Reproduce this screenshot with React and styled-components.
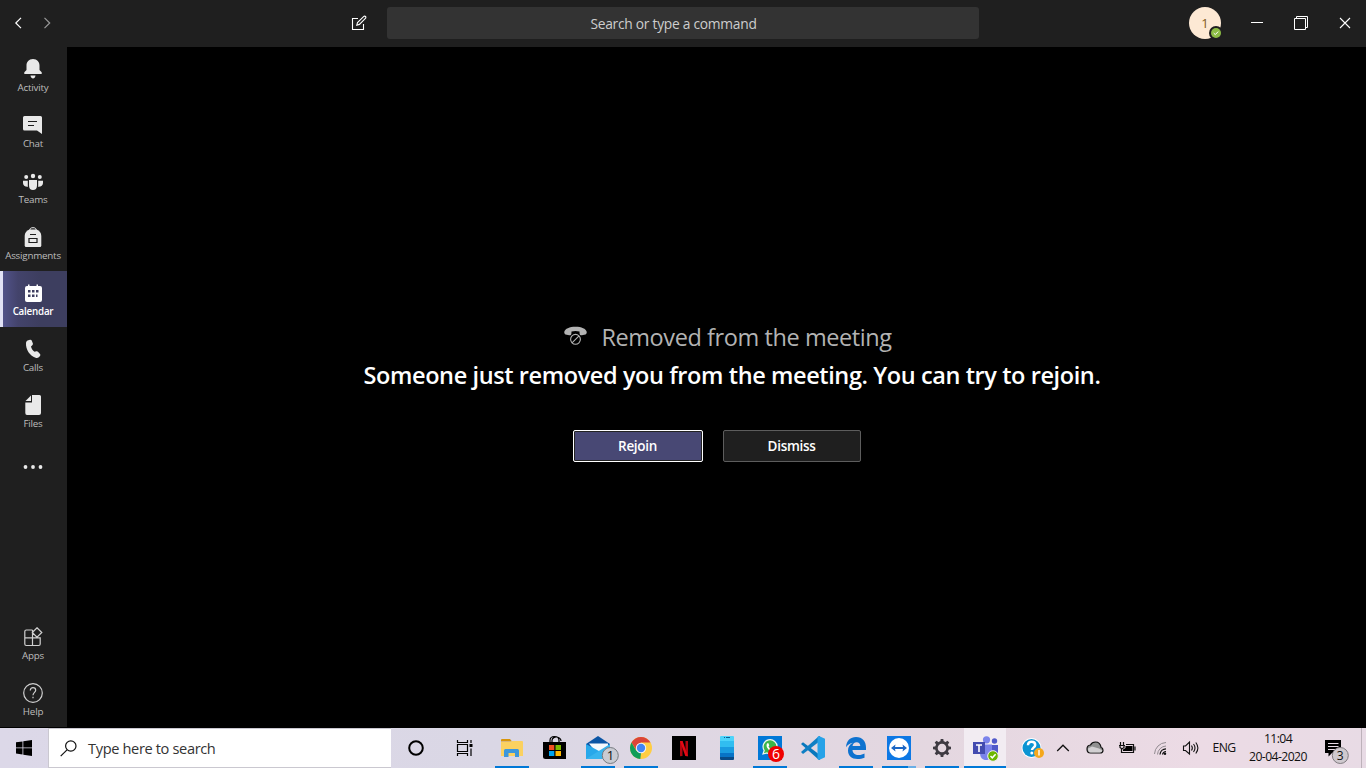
import React from "react";
import styled, { createGlobalStyle, css } from "styled-components";

const GlobalStyle = createGlobalStyle`
  * { box-sizing: border-box; }
  html, body, #root { height: 100%; }
  body {
    margin: 0;
    background: #000;
    overflow: hidden;
    font-family: "Open Sans", "Noto Sans", sans-serif;
  }
  svg { display: block; flex: none; }
`;

const Screen = styled.div`
  display: flex;
  flex-direction: column;
  width: 1366px;
  height: 768px;
  background: #000;
`;

const TitleBar = styled.header`
  display: flex;
  align-items: center;
  height: 47px;
  background: #1f1f1f;
  color: #fff;
`;

const HistoryNav = styled.nav`
  display: flex;
  width: 350px;
  padding-left: 14px;
  padding-bottom: 1px;
  gap: 20px;
`;

const ComposeButton = styled.div`
  width: 37px;
  margin-top: -1px;
`;

const CommandBox = styled.div`
  display: flex;
  align-items: center;
  justify-content: center;
  width: 592px;
  height: 32px;
  margin-top: -1px;
  padding-right: 19px;
  background: #333;
  border-radius: 3px;
  color: #cdcdcd;
  font-size: 13.8px;
  letter-spacing: -0.27px;
`;

const WindowControls = styled.div`
  display: flex;
  align-items: center;
  margin-left: 30px;
  padding-bottom: 1px;
  gap: 31px;
`;

const Avatar = styled.div`
  position: relative;
  display: grid;
  place-items: center;
  width: 32px;
  height: 32px;
  margin: -1px 0 0 210px;
  border-radius: 50%;
  background: #fde9d4;
  color: #835c22;
  font-size: 13px;
  font-weight: 500;
`;

const Presence = styled.div`
  position: absolute;
  right: -2px;
  bottom: -1px;
`;

const Body = styled.div`
  display: flex;
  height: 680px;
`;

const Sidebar = styled.aside`
  display: flex;
  flex-direction: column;
  width: 67px;
  background: #1f1f1f;
`;

const Spacer = styled.div`
  flex: 1;
`;

const SideItem = styled.div`
  display: flex;
  flex-direction: column;
  align-items: center;
  height: 56px;
  padding: 12px 1px 0 0;
  color: ${(p) => (p.$active ? "#fff" : "#e9e9e9")};
  ${(p) =>
    p.$active &&
    css`
      background: linear-gradient(90deg, #54558f 0, #43436b 18px, #3d3e5f 40px);
      box-shadow: inset 3px 0 0 #e2e2f6;
    `}
`;

const SideLabel = styled.span`
  margin-top: 2px;
  line-height: 13px;
  font-size: 9.8px;
  white-space: nowrap;
  letter-spacing: -0.22px;
  font-weight: ${(p) => (p.$active ? 600 : 500)};
  color: ${(p) => (p.$active ? "#fff" : "#bdbdbd")};
`;

const Main = styled.main`
  display: flex;
  flex: 1;
  flex-direction: column;
  align-items: center;
  padding-top: 272px;
`;

const Notice = styled.div`
  display: flex;
  align-items: center;
  height: 36px;
  gap: 14px;
  padding-left: 23px;
  color: #b3b3b3;
`;

const NoticeIcon = styled.div`
  margin-top: -2px;
`;

const NoticeTitle = styled.h1`
  margin: 0;
  font-size: 23.5px;
  font-weight: 400;
  line-height: 36px;
  white-space: nowrap;
  letter-spacing: -0.42px;
`;

const NoticeText = styled.p`
  margin: 2px 0 0;
  padding-left: 31px;
  font-size: 23.5px;
  font-weight: 600;
  line-height: 36px;
  color: #fff;
  white-space: nowrap;
  letter-spacing: -0.4px;
`;

const Actions = styled.div`
  display: flex;
  gap: 20px;
  margin-top: 37px;
`;

const Button = styled.button`
  width: ${(p) => p.$width}px;
  height: 32px;
  padding: 0;
  border-radius: 2px;
  font: 650 13.5px/18px "Open Sans", sans-serif;
  letter-spacing: -0.32px;
  color: #fff;
  border: 1px solid ${(p) => (p.$primary ? "#fff" : "#5d5d5d")};
  background: ${(p) => (p.$primary ? "#484874" : "#1f1f1f")};
  box-shadow: ${(p) => (p.$primary ? "inset 0 0 0 1px #232323" : "none")};
`;

const Taskbar = styled.footer`
  display: flex;
  height: 40px;
  margin-top: 1px;
  color: #111;
  background: linear-gradient(90deg, #dcd8e8 0, #dad7e5 500px, #dfd7e3 700px, #e4d7e0 930px, #ecdbe5 1200px, #e8dbe5 1366px);
`;

const StartButton = styled.div`
  display: grid;
  place-items: center;
  width: 48px;
`;

const SearchBox = styled.div`
  display: flex;
  align-items: center;
  width: 343px;
  padding-left: 11px;
  gap: 11px;
  background: #fff;
  border: 1px solid #cac8d0;
  border-right: 0;
  color: #333;
  font-size: 14.6px;
  letter-spacing: -0.36px;
`;

const SystemButton = styled.div`
  display: grid;
  place-items: center;
  width: ${(p) => p.$width}px;
`;

const TaskList = styled.div`
  display: flex;
  margin-left: 3px;
`;

const Task = styled.div`
  width: ${(p) => (p.$active ? 42 : 43)}px;
  height: 40px;
  background: ${(p) =>
    p.$active
      ? "linear-gradient(#0078d7,#0078d7) 0 38px / 42px 2px no-repeat, #f2ecf2"
      : p.$stacked
        ? "linear-gradient(90deg,#0078d7 26px,#6aaee6 26px) 4px 38px / 34px 2px no-repeat"
        : p.$running
          ? "linear-gradient(#0078d7,#0078d7) 4px 38px / 34px 2px no-repeat"
          : "none"};
`;

const Tray = styled.div`
  display: flex;
  margin-left: 10px;
`;

const Language = styled.div`
  display: grid;
  place-items: center;
  width: 36px;
  padding-bottom: 1px;
  font-size: 12.2px;
  letter-spacing: -0.6px;
`;

const Clock = styled.div`
  width: 72px;
  padding-top: 2px;
  text-align: center;
  font-size: 12.2px;
  line-height: 18px;
  letter-spacing: -0.58px;
  white-space: nowrap;
`;

const ShowDesktop = styled.div`
  flex: 1;
  border-left: 1px solid #bdb2ba;
`;

const BadgeNumber = styled.text`
  font-family: "Open Sans", sans-serif;
  text-anchor: middle;
`;

const SideIcon = ({ children }) => (
  <svg width="20" height="20" viewBox="0 0 20 20" fill="currentColor">{children}</svg>
);

const outline = { fill: "none", stroke: "#d0d0d0", strokeWidth: 1.2 };

const icons = {
  bell: (
    <SideIcon>
      <path d="M10 0C5.8 0 3.5 3 3.5 6.5V11L1.3 13.2V15H18.700V13.200L16.500 11V6.500C16.500 3 14.200 0 10 0Z" />
      <path d="M7.500 16.500H12.500C12 18.700 11.300 19.500 10 19.500S8 18.700 7.500 16.500Z" />
    </SideIcon>
  ),
  chat: (
    <SideIcon>
      <path d="M1.500 1H17.500Q19 1 19 2.500V19L14 15.500H1.500Q0 15.500 0 14V2.500Q0 1 1.500 1Z" />
      <path d="M5 6.500H14M5 10.500H11" stroke="#1f1f1f" strokeWidth="1.200" />
    </SideIcon>
  ),
  teams: (
    <SideIcon>
      <circle cx="10" cy="5" r="2.200" />
      <circle cx="3.200" cy="6" r="2" />
      <circle cx="16.800" cy="6" r="2" />
      <path d="M6 9H14V14.500C14 17.500 12.500 19 10 19S6 17.500 6 14.500ZM0 9.800H4.800V14.800L5 15.700C2 15.900 0 14.500 0 12ZM20 9.800H15.200V14.800L15 15.700C18 15.900 20 14.500 20 12Z" />
    </SideIcon>
  ),
  bag: (
    <SideIcon>
      <path d="M6.800 3C7 1.200 8 .7 10 .7S13 1.200 13.200 3" fill="none" stroke="currentColor" />
      <path d="M6.500 2.500H13.500C16.500 3.500 18.300 6 18.300 9V18.500Q18.300 20 16.800 20H3.200Q1.700 20 1.700 18.500V9C1.700 6 3.500 3.500 6.500 2.500Z" />
      <path d="M7 7.500H13M6 11.500H14V15.500H6Z" fill="none" stroke="#1f1f1f" strokeWidth="1.200" />
    </SideIcon>
  ),
  calendar: (
    <SideIcon>
      <path d="M4 3H5V1.500H6.500V3H13.500V1.500H15V3H17Q19 3 19 5V17Q19 19 17 19H4Q2 19 2 17V5Q2 3 4 3Z" />
      <path d="M9 7H11.500V9.500H9ZM13 7H15.500V9.500H13ZM5 11.500H7.500V14H5ZM5 7H7.500V9.500H5ZM9 11.500H11.500V14H9ZM13 11.500H14.500V14H13Z" fill="#3e3e60" />
    </SideIcon>
  ),
  phone: (
    <SideIcon>
      <path d="M4.500 1.500L7 .7C7.800.5 8.400.9 8.700 1.600L9.800 4.300C10.100 5 9.900 5.700 9.300 6.200L8 7.500C8.400 9.800 9.700 11.500 11.600 12.800L13.300 12.300C14 12.100 14.700 12.300 15.200 12.900L17 15.100C17.500 15.700 17.400 16.400 17 17L15.800 18.300C15.100 19 14.200 19.200 13.200 19C6.700 17.200 2.600 10.500 3 4.100C3.100 2.700 3.700 1.900 4.500 1.500Z" />
    </SideIcon>
  ),
  file: (
    <SideIcon>
      <path d="M9 0H16.500Q18 0 18 1.500V18Q18 20 16 20H4Q2.300 20 2.300 18V7.500H9Z" />
      <path d="M2.500 6L8 .5V6Z" />
    </SideIcon>
  ),
  dots: (
    <SideIcon>
      <circle cx="2.500" cy="16" r="1.900" />
      <circle cx="10" cy="16" r="1.900" />
      <circle cx="17.500" cy="16" r="1.900" />
    </SideIcon>
  ),
  apps: (
    <SideIcon>
      <path {...outline} d="M9.500 3H3.300Q1.800 3 1.800 4.500V17Q1.800 18.500 3.300 18.500H15.700Q17.200 18.500 17.200 17V10.800H1.800M9.500 18.500V3M14 .8L18.800 5.500L14 10.200L9.300 5.500Z" />
    </SideIcon>
  ),
  help: (
    <SideIcon>
      <circle cx="10" cy="10" r="9.300" {...outline} />
      <path {...outline} d="M7.300 7.500C7.300 5.600 8.400 4.700 10 4.700C11.700 4.700 12.700 5.700 12.700 7.200C12.700 9.300 10 9.500 10 12.300M10 13.700V15.200" />
    </SideIcon>
  ),
};

const primaryNav = [
  ["Activity", "bell"],
  ["Chat", "chat"],
  ["Teams", "teams"],
  ["Assignments", "bag"],
  ["Calendar", "calendar"],
  ["Calls", "phone"],
  ["Files", "file"],
  ["", "dots"],
];
const secondaryNav = [
  ["Apps", "apps"],
  ["Help", "help"],
];

const NavItem = ({ item: [label, icon] }) => {
  const active = label === "Calendar";
  return (
    <SideItem $active={active}>
      {icons[icon]}
      <SideLabel $active={active}>{label}</SideLabel>
    </SideItem>
  );
};

const TaskIcon = ({ children }) => (
  <svg width="43" height="40" viewBox="0 0 43 40" fill="none">{children}</svg>
);

const TrayIcon = ({ width = 32, children }) => (
  <svg width={width} height="40" viewBox={`0 0 ${width} 40`} fill="none" stroke="#111">{children}</svg>
);

const gearTeeth = [0, 45, 90, 135, 180, 225, 270, 315];

const tasks = [
  {
    name: "explorer",
    running: true,
    art: (
      <>
        <path d="M10 12Q10 11 11 11H19L21 13.500H10Z" fill="#d8950a" />
        <path d="M10 14H20L21 13H31Q32 13 32 14V28H10Z" fill="#fbd160" />
        <path d="M13 29V22.500Q13 21 14.500 21H26.500Q28 21 28 22.500V29H24V25H17.500V29Z" fill="#3d97dc" />
      </>
    ),
  },
  {
    name: "store",
    art: (
      <>
        <path d="M16 15V12.500C16 9.500 18 8.500 20.500 8.500S25 9.500 25 12.500V15M18 15V12.500C18 10 21 8.500 23 9S27 11 27 13" stroke="#000" strokeWidth="1.200" />
        <path d="M9 14H32V31H11.500Q9 31 9 28.500Z" fill="#000" />
        <path d="M15 17H20.300V22H15Z" fill="#f25022" />
        <path d="M21.500 17H27V22H21.500Z" fill="#7fba00" />
        <path d="M15 23H20.300V28H15Z" fill="#00a4ef" />
        <path d="M21.500 23H27V28H21.500Z" fill="#ffb900" />
      </>
    ),
  },
  {
    name: "mail",
    running: true,
    art: (
      <>
        <path d="M9 16L21 8L33 16V20H9Z" fill="#0b55a5" />
        <path d="M12 15.500H31V18L19.500 25Z" fill="#f5f9fd" />
        <path d="M9 16L33 29V31H9Z" fill="#28a8ea" />
        <path d="M33 16V31H9Z" fill="#38b4ee" />
        <circle cx="33.300" cy="27.500" r="8" fill="#c9cbd2" stroke="#777b80" />
        <BadgeNumber x="33.500" y="32" fontSize="13" fill="#111">1</BadgeNumber>
      </>
    ),
  },
  {
    name: "chrome",
    running: true,
    art: (
      <>
        <circle cx="21" cy="20" r="11" fill="#ffcd42" />
        <path d="M11.500 14.500A11 11 0 0 1 30.500 14.500H21L16.500 22.500Z" fill="#db4437" />
        <path d="M11.500 14.500L16.300 22.700L21 25L20.300 31A11 11 0 0 1 11.500 14.500Z" fill="#0f9d58" />
        <circle cx="21" cy="20" r="5.200" fill="#f4f4f4" />
        <circle cx="21" cy="20" r="4.200" fill="#4285f4" />
      </>
    ),
  },
  {
    name: "netflix",
    art: (
      <>
        <path d="M9 8H33V32H9Z" fill="#000" />
        <path d="M17 13H19.500V28L17 28.300ZM22.500 13H25V28.300L22.500 28Z" fill="#b1060f" />
        <path d="M17 13H19.600L25 28.300L22.300 28Z" fill="#e50914" />
      </>
    ),
  },
  {
    name: "phone",
    art: (
      <>
        <path d="M15 8H27Q28 8 28 9V14H14V9Q14 8 15 8Z" fill="#4dd3fa" />
        <path d="M14 13H28V19H14Z" fill="#31bdf0" />
        <path d="M14 19H28V25H14Z" fill="#1a9be0" />
        <path d="M14 25H28V29H14Z" fill="#0873c6" />
        <path d="M14 29H28V31Q28 32 27 32H15Q14 32 14 31Z" fill="#094a87" />
        <path d="M18 9.500H19M20 9.500H24" stroke="#0b5f93" />
      </>
    ),
  },
  {
    name: "whatsapp",
    running: true,
    art: (
      <>
        <path d="M9 8H33V32H9Z" fill="#0078d7" />
        <path d="M14 26L15.200 22.500A7 7 0 1 1 18 25Z" fill="#3cb54a" stroke="#eef7ee" strokeWidth="1.200" />
        <path d="M18 15.500L19.200 15L20.300 17.200L19.500 18.300C20 19.700 21 20.700 22.300 21.200L23.500 20.300L25.300 21.500C25 23.200 23 23.700 21 22.600C18.500 21 16.700 18 18 15.500Z" fill="#fff" />
        <circle cx="27" cy="26" r="8" fill="#f00000" />
        <BadgeNumber x="27" y="31" fontSize="14" fill="#fff">6</BadgeNumber>
      </>
    ),
  },
  {
    name: "vscode",
    art: (
      <>
        <path d="M9 16L11 14.200L28 27V32L26.500 31.500Z" fill="#0878bd" />
        <path d="M9 24L11 26L28 13V8L26.500 8.500Z" fill="#0f7fc4" />
        <path d="M27 8L33 10.800V29.200L27 32L25.500 31V9Z" fill="#27a2e8" />
      </>
    ),
  },
  {
    name: "edge",
    running: true,
    art: (
      <path d="M11 19.200C11.500 12.500 15.500 9 21 9C27.500 9 31 13.500 31 19.500V22H17.500C17.800 25.500 20 27 23.500 27C26 27 28 26.400 29.500 25.500V29.700C27.500 30.600 25 31 22.500 31C16.700 31 13 27.800 13 22.500C13 19 14.800 16.200 18 14.700C15 15 12.700 16.600 11 19.200ZM17.500 18H25.300C25.300 15.500 23.800 14.200 21.700 14.200C19.300 14.200 17.900 15.800 17.500 18Z" fill="#0e72cf" />
    ),
  },
  {
    name: "teamviewer",
    stacked: true,
    art: (
      <>
        <path d="M9 8H33V32H9Z" fill="#0d78e4" />
        <circle cx="21" cy="20" r="10" fill="#fff" />
        <path d="M13 20L17.500 16.500L17 19H25L24.500 16.500L29 20L24.500 23.500L25 21H17L17.500 23.500Z" fill="#1b66c4" />
      </>
    ),
  },
  {
    name: "settings",
    running: true,
    art: (
      <>
        <circle cx="21" cy="20" r="5.600" stroke="#3f3b42" strokeWidth="2.600" />
        {gearTeeth.map((angle) => (
          <path key={angle} d="M19.200 14L19.700 11H22.300L22.800 14Z" fill="#3f3b42" transform={`rotate(${angle} 21 20)`} />
        ))}
      </>
    ),
  },
  {
    name: "teams",
    active: true,
    art: (
      <>
        <circle cx="30.500" cy="13" r="2.700" fill="#5059c9" />
        <path d="M26 17H34V24C34 27 32 28.500 29 28.500H26Z" fill="#5059c9" />
        <circle cx="22.500" cy="11.800" r="3.600" fill="#7b83eb" />
        <path d="M16 16.500H28V25C28 29.500 25.500 32 22 32S16 29.500 16 25Z" fill="#7b83eb" />
        <path d="M9 14H21V26H9Z" fill="#434baf" />
        <path d="M12 17H18M15 17V24" stroke="#fff" strokeWidth="1.600" />
        <circle cx="29" cy="28" r="5.300" fill="#6bb700" stroke="#f2ecf2" />
        <path d="M26.500 28L28.300 29.800L31.600 26.300" stroke="#fff" strokeWidth="1.500" />
      </>
    ),
  },
];

export default function App() {
  return (
    <>
      <GlobalStyle />
      <Screen>
        <TitleBar>
          <HistoryNav>
            <svg width="9" height="12" viewBox="0 0 9 12" fill="none" stroke="#fff" strokeWidth="1.200"><path d="M7 .8L1.800 6L7 11.200" /></svg>
            <svg width="9" height="12" viewBox="0 0 9 12" fill="none" stroke="#999" strokeWidth="1.200"><path d="M1.500 .8L6.700 6L1.500 11.200" /></svg>
          </HistoryNav>
          <ComposeButton>
            <svg width="17" height="16" viewBox="0 0 17 16" fill="none" stroke="#fff" strokeWidth="1.100">
              <path d="M8 3.500H2.500V14.500H13.500V9" />
              <path d="M6.800 10.200L7.500 7.500L13.600 1.600C14.200 1 15 1 15.500 1.500S16 2.800 15.400 3.400L9.400 9.400Z" />
            </svg>
          </ComposeButton>
          <CommandBox>Search or type a command</CommandBox>
          <Avatar>
            1
            <Presence>
              <svg width="14" height="14" viewBox="0 0 14 14" fill="none">
                <circle cx="7" cy="7" r="7" fill="#1f1f1f" />
                <circle cx="7" cy="7" r="5" fill="#8cbd45" />
                <path d="M4.700 7.100L6.300 8.600L9.200 5.600" stroke="#fff" />
              </svg>
            </Presence>
          </Avatar>
          <WindowControls>
            <svg width="12" height="14" viewBox="0 0 12 14" stroke="#fff"><path d="M0 6.500H12" /></svg>
            <svg width="14" height="14" viewBox="0 0 14 14" fill="none" stroke="#fff"><path d="M.5 2.500H11.500V13.500H.5ZM2.500 2.500V.5H13.500V11.500H11.500" /></svg>
            <svg width="12" height="12" viewBox="0 0 12 12" stroke="#fff" strokeWidth="1.100"><path d="M1 1L11 11M11 1L1 11" /></svg>
          </WindowControls>
        </TitleBar>

        <Body>
          <Sidebar>
            {primaryNav.map((item) => <NavItem key={item[1]} item={item} />)}
            <Spacer />
            {secondaryNav.map((item) => <NavItem key={item[1]} item={item} />)}
          </Sidebar>
          <Main>
            <Notice>
              <NoticeIcon>
                <svg width="23" height="20" viewBox="0 0 23 20" fill="none">
                  <path d="M.3 5.800C1 2.800 5.500.8 11.500.8S22 2.800 22.700 5.800C22.900 7 22.500 8 21.500 8.500L17.800 9.300C16.500 9.500 15.700 8.900 15.600 7.700L15.500 5.600C13 4.900 10 4.900 7.500 5.600L7.400 7.700C7.300 8.900 6.500 9.500 5.200 9.300L1.500 8.500C.5 8 .1 7 .3 5.800Z" fill="#b3b3b3" />
                  <circle cx="11.500" cy="13.300" r="6.200" fill="#000" />
                  <circle cx="11.500" cy="13.300" r="4.900" stroke="#b3b3b3" strokeWidth="1.100" />
                  <path d="M8 16.800L15 9.800" stroke="#b3b3b3" strokeWidth="1.100" />
                </svg>
              </NoticeIcon>
              <NoticeTitle>Removed from the meeting</NoticeTitle>
            </Notice>
            <NoticeText>Someone just removed you from the meeting. You can try to rejoin.</NoticeText>
            <Actions>
              <Button $primary $width={130}>Rejoin</Button>
              <Button $width={138}>Dismiss</Button>
            </Actions>
          </Main>
        </Body>

        <Taskbar>
          <StartButton>
            <svg width="16" height="16" viewBox="0 0 16 16" fill="#000">
              <path d="M0 2.300L6.500 1.400V7.500H0ZM7.300 1.300L16 0V7.500H7.300ZM0 8.300H6.500V14.500L0 13.600ZM7.300 8.300H16V16L7.300 14.700Z" />
            </svg>
          </StartButton>
          <SearchBox>
            <svg width="17" height="17" viewBox="0 0 17 17" fill="none" stroke="#111" strokeWidth="1.200">
              <circle cx="10.800" cy="6" r="5.200" />
              <path d="M7 9.800L.7 16.200" />
            </svg>
            Type here to search
          </SearchBox>
          <SystemButton $width={50}>
            <svg width="16" height="16" viewBox="0 0 16 16" fill="none" stroke="#000" strokeWidth="2"><circle cx="8" cy="8" r="6.800" /></svg>
          </SystemButton>
          <SystemButton $width={47}>
            <svg width="17" height="16" viewBox="0 0 17 16" fill="none" stroke="#000" strokeWidth="1.200">
              <path d="M1.500 4.500H11.500V11.500H1.500ZM1.500 0V2.500H11.500V0M1.500 16V13.500H11.500V16M15 0V3M15 8.500V16" />
              <path d="M13.500 4H16.500V7H13.500Z" fill="#000" stroke="none" />
            </svg>
          </SystemButton>
          <TaskList>
            {tasks.map((t) => (
              <Task key={t.name} $running={t.running} $stacked={t.stacked} $active={t.active}>
                <TaskIcon>{t.art}</TaskIcon>
              </Task>
            ))}
          </TaskList>
          <Tray>
            <TrayIcon>
              <g stroke="none">
                <circle cx="15.500" cy="20" r="10" fill="#fff" />
                <circle cx="15.500" cy="20" r="9" fill="#0b94d3" />
                <path d="M12 17.300C12 14.700 13.500 13.700 15.600 13.700S19.200 14.900 19.200 16.900C19.200 19.500 16 19.700 16 22" stroke="#fff" strokeWidth="2.500" />
                <circle cx="15.800" cy="25" r="1.500" fill="#fff" />
                <circle cx="23" cy="25" r="5" fill="#f5a81c" />
                <path d="M23 22V27.500" stroke="#fff" strokeWidth="1.400" />
              </g>
            </TrayIcon>
            <TrayIcon width={30}><path d="M9.200 23L15 17.200L20.800 23" strokeWidth="1.300" /></TrayIcon>
            <TrayIcon>
              <path d="M12.500 25H22Q25 25 25 22.200Q25 20 23 19.200C22.500 16 20.500 14 17.500 14C15 14 13.400 15.200 12.500 17C10.500 17.200 9 18.700 9 21Q9 25 12.500 25Z" fill="#909090" strokeWidth="1.200" />
              <path d="M10 20.500L14 18.500L21 20.500L24.300 22.500Q24 24.500 22 24.500H12.500Q10 24.300 10 20.500Z" fill="#d2d0d2" stroke="none" />
            </TrayIcon>
            <TrayIcon>
              <path d="M16 16.500H23.500V24.500H11.500V21M10.500 14V17M13.500 14V17M9 17.500H15M10 17.500V19.500L12 21L14 19.500V17.500M25 18.500V22.500" strokeWidth="1.200" />
              <path d="M15.500 18H22.500V23H13V21.500L15.500 20Z" fill="#000" stroke="none" />
            </TrayIcon>
            <TrayIcon>
              <path d="M12.500 26A12 12 0 0 1 24 14.500M15.500 26.500A9 9 0 0 1 24 18" stroke="#928b91" />
              <path d="M18 26.500A6.200 6.200 0 0 1 24 20.800M20.500 26.500A3.800 3.800 0 0 1 24 23.500" strokeWidth="1.200" />
              <circle cx="23" cy="25.800" r="1.200" fill="#111" stroke="none" />
            </TrayIcon>
            <TrayIcon>
              <path d="M9.500 18H11.500L15.500 14V26L11.500 22.500H9.500ZM17.500 17.500Q19.200 20 17.500 22.500M19.500 16Q22.500 20 19.500 24M21.800 14.500Q26 20 21.800 25.500" strokeWidth="1.100" />
            </TrayIcon>
            <Language>ENG</Language>
            <Clock>11:04<br />20-04-2020</Clock>
            <TrayIcon width={47}>
              <path d="M11 12H27V25H18L14.500 28.500V25H11Z" fill="#000" stroke="none" />
              <path d="M14 15.500H24.500M14 18.500H24.500M14 21.500H22" stroke="#e8dbe5" />
              <circle cx="26.300" cy="27.500" r="8" fill="#cfc9ce" stroke="#817c81" />
              <BadgeNumber x="26.300" y="31.700" fontSize="12" fill="#111" stroke="none">3</BadgeNumber>
            </TrayIcon>
          </Tray>
          <ShowDesktop />
        </Taskbar>
      </Screen>
    </>
  );
}
